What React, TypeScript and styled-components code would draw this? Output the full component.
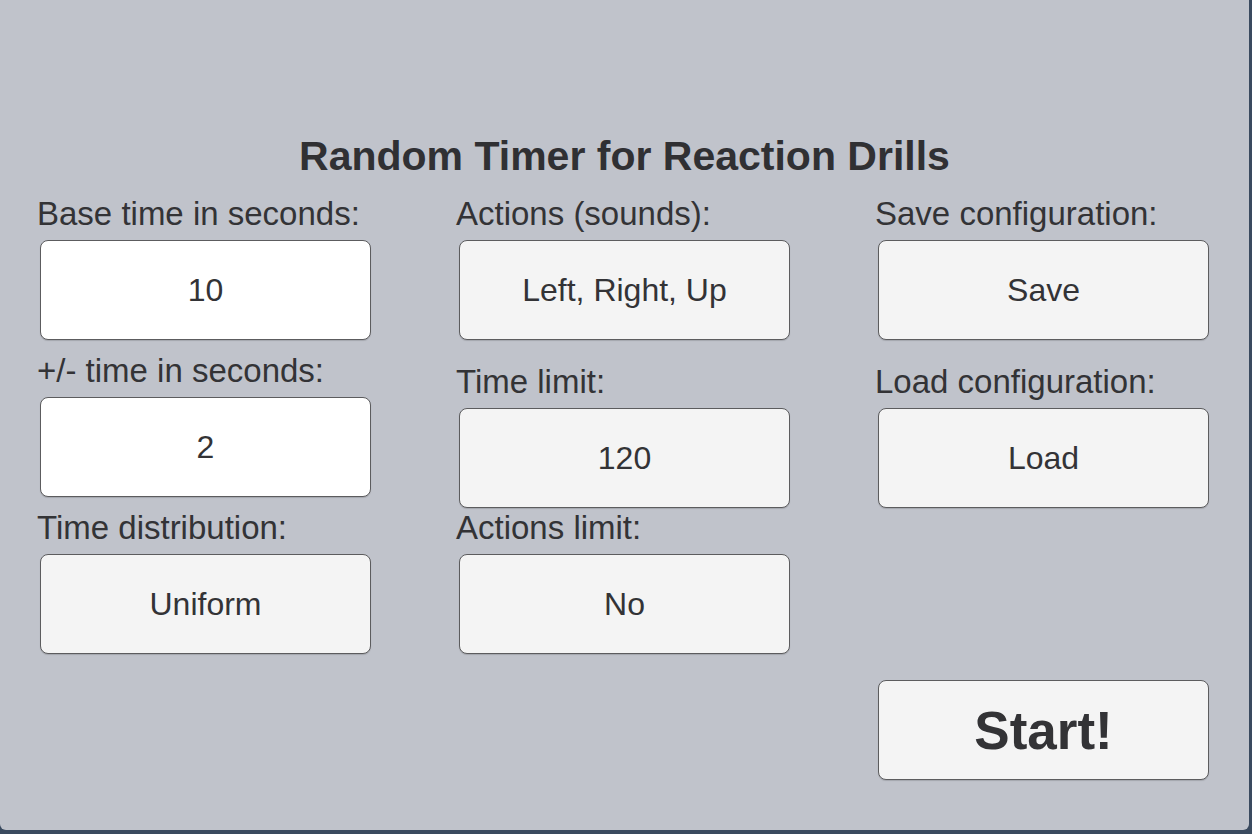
import styled, { createGlobalStyle } from 'styled-components'

const GlobalStyle = createGlobalStyle`
  html, body {
    margin: 0;
    padding: 0;
    background: #3a4a5f;
  }
  body {
    font-family: 'Liberation Sans', Arial, sans-serif;
  }
`

const Panel = styled.main`
  background: #c0c3cb;
  border-radius: 0 0 6px 6px;
  box-sizing: border-box;
  height: 830px;
  padding-top: 132px;
  width: 1249px;
`

const Title = styled.h1`
  color: #303033;
  font-size: 41px;
  font-weight: 700;
  line-height: 48px;
  margin: 0;
  text-align: center;
`

const Columns = styled.div`
  column-gap: 84px;
  display: grid;
  grid-template-columns: repeat(3, 335px);
  margin-top: 16px;
  padding-left: 37px;
`

const Column = styled.div`
  display: flex;
  flex-direction: column;
`

const FieldWrapper = styled.div<{ $spacing: number }>`
  display: flex;
  flex-direction: column;
  margin-top: ${({ $spacing }): string => `${$spacing}px`};
`

const Label = styled.label`
  color: #333336;
  font-size: 33px;
  line-height: 36px;
  margin-bottom: 8px;
  white-space: nowrap;
`

const Box = styled.button<{ $input?: boolean; $big?: boolean }>`
  align-items: center;
  background: ${({ $input }): string => ($input ? '#ffffff' : '#f4f4f4')};
  border: 1px solid #5c5c5e;
  border-radius: 8px;
  box-shadow: 0 1px 1px rgba(0, 0, 0, 0.15);
  box-sizing: border-box;
  color: #333336;
  display: flex;
  font-family: 'Liberation Sans', Arial, sans-serif;
  font-size: ${({ $big }): string => ($big ? '53px' : '32px')};
  font-weight: ${({ $big }): number => ($big ? 700 : 400)};
  height: 100px;
  justify-content: center;
  margin-left: 3px;
  padding: 0;
  width: 331px;
`

type FieldProps = {
  label: string
  value: string
  input?: boolean
  spacing?: number
}

const Field = ({ input, label, spacing = 0, value }: FieldProps) => (
  <FieldWrapper $spacing={spacing}>
    <Label>{label}</Label>
    <Box $input={input}>{value}</Box>
  </FieldWrapper>
)

const StartWrapper = styled.div`
  margin-top: 172px;
`

const App = () => (
  <>
    <GlobalStyle />
    <Panel>
      <Title>Random Timer for Reaction Drills</Title>
      <Columns>
        <Column>
          <Field label="Base time in seconds:" value="10" input />
          <Field label="+/- time in seconds:" value="2" input spacing={13} />
          <Field label="Time distribution:" value="Uniform" spacing={13} />
        </Column>
        <Column>
          <Field label="Actions (sounds):" value="Left, Right, Up" />
          <Field label="Time limit:" value="120" spacing={24} />
          <Field label="Actions limit:" value="No" spacing={2} />
        </Column>
        <Column>
          <Field label="Save configuration:" value="Save" />
          <Field label="Load configuration:" value="Load" spacing={24} />
          <StartWrapper>
            <Box $big>Start!</Box>
          </StartWrapper>
        </Column>
      </Columns>
    </Panel>
  </>
)

export default App
